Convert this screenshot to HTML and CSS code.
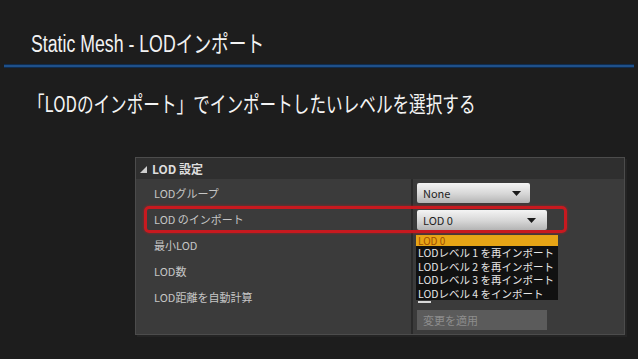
FILE: index.html
```html
<!DOCTYPE html>
<html lang="ja">
<head>
<meta charset="utf-8">
<link rel="stylesheet" href="styles.css">
</head>
<body>
<div class="slide">
  <header class="title"><span class="sx title-text">Static Mesh - LODインポート</span></header>
  <div class="rule"></div>
  <p class="subtitle"><span class="sx sub-text">「LODのインポート」でインポートしたいレベルを選択する</span></p>

  <section class="panel">
    <div class="panel-head">
      <svg class="caret" width="7" height="7" viewBox="0 0 7 7"><polygon points="7,0 7,7 0,7" fill="#cfcfcf"/></svg>
      <span class="head-text">LOD 設定</span>
    </div>
    <div class="panel-body">
      <div class="labels">
        <div class="row">LODグループ</div>
        <div class="row">LOD のインポート</div>
        <div class="row">最小LOD</div>
        <div class="row">LOD数</div>
        <div class="row">LOD距離を自動計算</div>
      </div>
      <div class="values">
        <div class="combo combo-none">
          <span>None</span>
          <svg width="9" height="5" viewBox="0 0 9 5"><polygon points="0,0 9,0 4.5,5" fill="#1a1a1a"/></svg>
        </div>
        <div class="combo combo-lod">
          <span>LOD 0</span>
          <svg width="9" height="5" viewBox="0 0 9 5"><polygon points="0,0 9,0 4.5,5" fill="#1a1a1a"/></svg>
        </div>
        <ul class="menu">
          <li class="item selected"><span>LOD 0</span></li>
          <li class="item"><span>LODレベル 1 を再インポート</span></li>
          <li class="item"><span>LODレベル 2 を再インポート</span></li>
          <li class="item"><span>LODレベル 3 を再インポート</span></li>
          <li class="item"><span>LODレベル 4 をインポート</span></li>
        </ul>
        <div class="scrollbit"></div>
        <div class="apply">変更を適用</div>
      </div>
    </div>
    <div class="highlight"></div>
  </section>
</div>
</body>
</html>
```

FILE: styles.css
```css
* { box-sizing: border-box; }
html, body { margin: 0; padding: 0; }
body {
  width: 638px;
  height: 359px;
  overflow: hidden;
  background: #1d1d1d;
}
.slide {
  display: flex;
  flex-direction: column;
  width: 638px;
  height: 359px;
}
.sx {
  display: inline-block;
  white-space: nowrap;
  transform-origin: 0 50%;
}
.title {
  height: 26px;
  margin-top: 31px;
  padding-left: 31px;
  font-family: "Liberation Sans", "Noto Sans CJK JP", sans-serif;
  font-size: 23px;
  line-height: 26px;
  color: #f2f2f2;
}
.title-text { transform: scaleX(0.77); }
.rule {
  margin: 7px 4px 0 4px;
  height: 4px;
  background: #1f5089;
  border-top: 1px solid #0f2c4f;
  border-bottom: 1px solid #0f2c4f;
}
.subtitle {
  margin: 20px 0 0 0;
  height: 28px;
  padding-left: 28px;
  font-family: "Noto Sans CJK JP", sans-serif;
  font-size: 22px;
  line-height: 28px;
  color: #f4f4f4;
}
.sub-text { transform: scaleX(0.755); }

.panel {
  position: relative;
  margin: 41px 0 0 135px;
  width: 490px;
  height: 178px;
  border: 1px solid #4c4c4c;
  background: #3b3b3b;
  box-shadow: 2px 2px 0 #242424;
  display: flex;
  flex-direction: column;
  font-family: "Noto Sans CJK JP", sans-serif;
}
.panel-head {
  height: 21px;
  background: #2f2f2f;
  display: flex;
  align-items: center;
  gap: 5px;
  padding-left: 4px;
}
.caret { margin-top: 1px; }
.head-text {
  font-size: 12px;
  font-weight: bold;
  color: #dedede;
}
.panel-body {
  flex: 1;
  display: flex;
}
.labels {
  width: 277px;
  border-right: 2px solid #2a2a2a;
  padding: 1px 0 0 18px;
}
.row {
  height: 26px;
  display: flex;
  align-items: center;
  font-size: 11px;
  color: #c6c6c6;
  white-space: nowrap;
}
.values {
  flex: 1;
  display: flex;
  flex-direction: column;
  align-items: flex-start;
  padding-left: 4px;
}
.combo {
  height: 20px;
  border-radius: 2px;
  background: linear-gradient(#f4f4f4, #d6d6d6 55%, #b4b4b4);
  display: flex;
  align-items: center;
  justify-content: space-between;
  padding: 0 9px 0 6px;
  font-size: 11px;
  color: #1e1e1e;
}
.combo-none { width: 113px; margin-top: 4px; }
.combo-lod { width: 130px; margin-top: 7px; padding-right: 11px; }
.menu {
  list-style: none;
  margin: 5px 0 0 -1px;
  padding: 0;
  width: 142px;
  background: #111;
}
.item {
  height: 13.5px;
  display: flex;
  align-items: center;
  padding-left: 2px;
  font-size: 10.5px;
  line-height: 11px;
  color: #e6e6e6;
  white-space: nowrap;
}
.item span { display: block; line-height: 11px; }
.item.selected {
  height: 11px;
  background: #e7a516;
  color: #a04e00;
  font-size: 10px;
}
.item.selected span { line-height: 10px; }
.scrollbit {
  margin: 1px 0 0 1px;
  width: 13px;
  height: 2px;
  background: #d8d8d8;
}
.apply {
  margin-top: 7px;
  width: 130px;
  height: 20px;
  background: #5b5b5b;
  display: flex;
  align-items: center;
  padding-left: 6px;
  font-size: 11px;
  color: #8d8d8d;
}
.highlight {
  position: absolute;
  left: 8px;
  top: 48px;
  width: 423px;
  height: 27px;
  border: 3px solid #c8191f;
  border-radius: 5px;
  box-shadow: 0 0 3px rgba(220, 20, 20, 0.6);
  pointer-events: none;
}
```
